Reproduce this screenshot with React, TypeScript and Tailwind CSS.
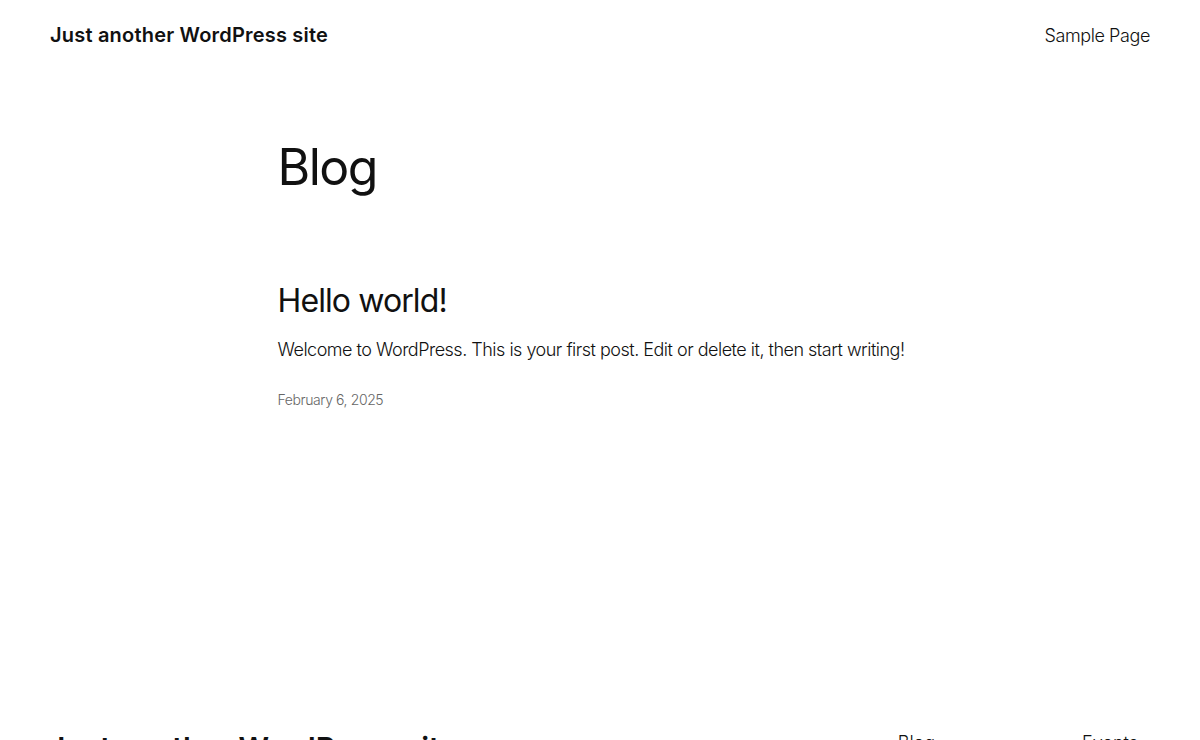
export default function App() {
  return (
    <div className="min-h-screen bg-white text-[#111111]" style={{ fontFamily: "Inter, 'Noto Sans', sans-serif" }}>
      <header className="flex h-[70px] items-center justify-between px-[50px]">
        <a className="text-[20px] font-semibold tracking-[0.2px]">Just another WordPress site</a>
        <nav>
          <a className="text-[18px] font-light tracking-[-0.4px]">Sample Page</a>
        </nav>
      </header>

      <main className="mx-auto w-[645px] pt-[62px]">
        <h1 className="text-[50px] font-normal leading-[70px] tracking-[-1.5px]">Blog</h1>

        <article className="mt-[78px]">
          <h2 className="text-[32px] font-normal leading-[42px] tracking-[-0.9px]">Hello world!</h2>
          <p className="mt-[14px] whitespace-nowrap text-[18px] font-light leading-[28px] tracking-[-0.5px]">
            Welcome to WordPress. This is your first post. Edit or delete it, then start writing!
          </p>
          <p className="mt-[26px] text-[14px] font-light leading-[20px] tracking-[-0.4px] text-[#666666]">
            February 6, 2025
          </p>
        </article>
      </main>

      <footer className="mt-[318px] flex items-start justify-between pl-[48px] pr-[62px]">
        <a className="text-[30px] font-semibold leading-[40px]">Just another WordPress site</a>
        <div className="flex gap-[147px] pt-[1px]">
          <a className="text-[18px] font-light leading-[27px]">Blog</a>
          <a className="text-[18px] font-light leading-[27px]">Events</a>
        </div>
      </footer>
    </div>
  );
}
